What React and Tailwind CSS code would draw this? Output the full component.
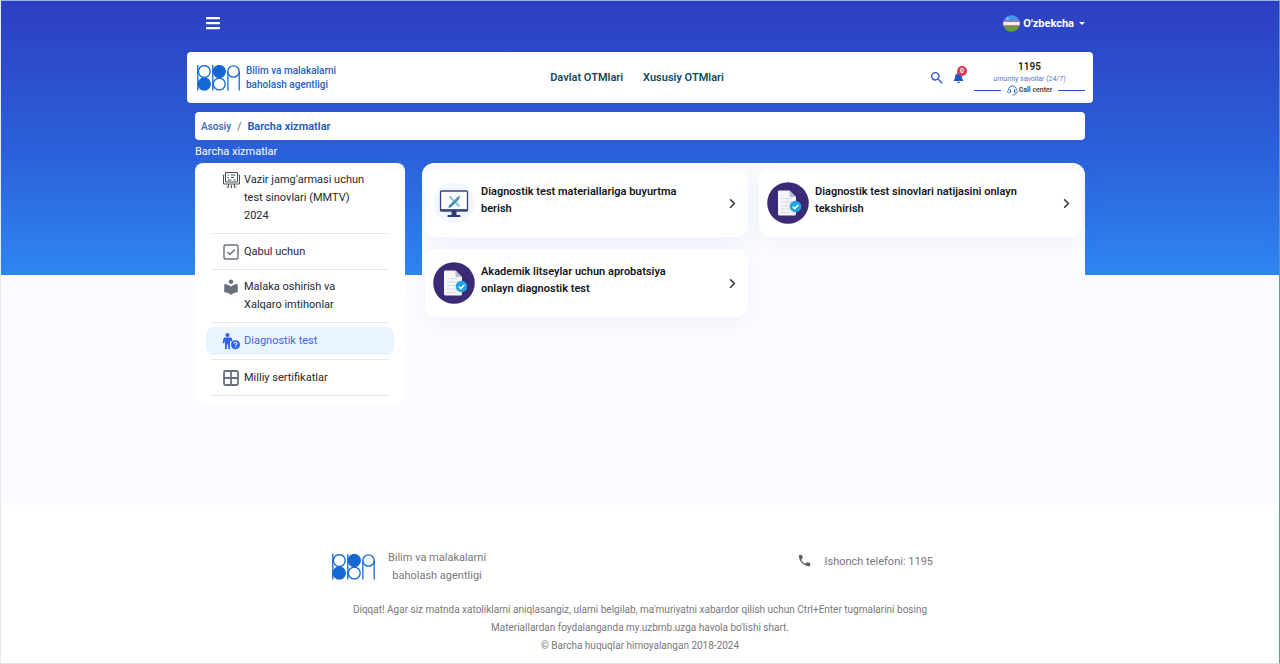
import { FaBars, FaBell } from "react-icons/fa";
import { MdSearch, MdPhone, MdLocalLibrary } from "react-icons/md";
import { ChevronRight } from "lucide-react";

function Logo({ className }) {
  return (
    <svg viewBox="0 0 43 26" className={className} fill="none" stroke="#1568d3" strokeWidth="1.3" aria-hidden="true">
      <path d="M.8 0v25.5M15.8 0v25.5M30.9 6.500v19M42.200 6.500v19" />
      <circle cx="7.300" cy="6.500" r="5.900" />
      <circle cx="7.300" cy="19" r="6" fill="#1568d3" />
      <circle cx="22.300" cy="6.500" r="6" fill="#1568d3" />
      <circle cx="22.300" cy="19" r="5.900" />
      <circle cx="36.500" cy="6.500" r="5.700" />
    </svg>
  );
}

function Flag() {
  return (
    <svg viewBox="0 0 18 18" className="size-[17px]" aria-hidden="true">
      <clipPath id="flag-round"><circle cx="9" cy="9" r="8.8" /></clipPath>
      <g clipPath="url(#flag-round)">
        <rect width="18" height="7" fill="#4a93ea" />
        <rect y="6.400" width="18" height="5.400" fill="#f7eef2" />
        <rect y="6.200" width="18" height="1.200" fill="#b0748f" />
        <rect y="10.800" width="18" height="1.200" fill="#a8707a" />
        <rect y="11.800" width="18" height="7" fill="#6b9a3a" />
        <circle cx="5" cy="4" r="1.200" fill="#a5cdf3" />
      </g>
    </svg>
  );
}

function ExamScreenIcon({ className }) {
  return (
    <svg viewBox="0 0 18 18" className={className} fill="none" stroke="#4b5058" aria-hidden="true">
      <path d="M3.500 11V1.500h12V11M2.500 4H1.500v9h16V4H16.500M3.500 11h12" />
      <path d="M5.500 4h1.500M9 4h4.500M5.500 6.500h1.500M9 6.500h3M5.500 9h4M11.500 9h2" />
      <path d="M6.500 13v2.500M12.500 13v2.500M4.500 16h3M11.500 16h3M9.500 14v3" />
    </svg>
  );
}

function CheckBoxIcon({ className }) {
  return (
    <svg viewBox="0 0 18 18" className={className} fill="none" stroke="#69707d" aria-hidden="true">
      <rect x="2" y="2" width="14" height="14" rx="1.500" strokeWidth="1.400" />
      <path d="M5.500 9l2.500 2.500 4.800-5" strokeWidth="1.500" />
    </svg>
  );
}

function WindowIcon({ className }) {
  return (
    <svg viewBox="0 0 18 18" className={className} fill="none" stroke="#69707d" strokeWidth="1.800" aria-hidden="true">
      <rect x="2" y="2" width="14" height="14" rx="1.500" />
      <path d="M9 2v14M2 9h14" />
    </svg>
  );
}

function PersonQuestionIcon({ className }) {
  return (
    <svg viewBox="0 0 18 18" className={className} fill="#2f62e8" aria-hidden="true">
      <circle cx="5.500" cy="3" r="2" />
      <path d="M3 5.500h5c1 0 1.700.5 2 1.300l.6 2-1.500.9L8 8.500V17H6.200v-4.500H4.800V17H3V8.500l-.8 3L.5 11l.9-4C1.600 6 2 5.500 3 5.500z" />
      <circle cx="13.500" cy="12.700" r="4.500" />
      <path d="M12 11.700c0-2.100 3.100-1.900 2.900 0-.1 1.100-1.300 1-1.300 2M13.600 14.500v1.100" stroke="#eaf4ff" strokeWidth="1.100" fill="none" />
    </svg>
  );
}

function MonitorBadge() {
  return (
    <svg viewBox="0 0 42 42" className="size-[42px] shrink-0" aria-hidden="true">
      <circle cx="21" cy="21" r="20.500" fill="#f3f7fd" />
      <rect x="7.500" y="9" width="27" height="20" rx="1" fill="#fdfeff" stroke="#35457f" strokeWidth="1.300" />
      <path d="M7 28h28" stroke="#35457f" strokeWidth="1.800" />
      <path d="M18.500 29h5v4H27q1.500 1.700 0 2H15q-1.500-.3 0-2h3.500z" fill="#2c3c78" />
      <path d="M16.500 14.500l10 10" stroke="#8fc4d6" strokeWidth="2.200" />
      <path d="M27.500 13.500l-3.500 2-8 8-.5 2.500 2.500-.8 7.500-7.500z" fill="#4085b8" />
      <path d="M20 19.500l4.500-3" stroke="#5ec0c0" strokeWidth="1" />
    </svg>
  );
}

function DocumentBadge() {
  return (
    <svg viewBox="0 0 42 42" className="size-[42px] shrink-0" aria-hidden="true">
      <circle cx="21" cy="21" r="20.800" fill="#3b2b76" />
      <path d="M12 8.500h10.500l6.500 6.500v17q0 1.500-1.500 1.500h-15q-1.500 0-1.500-1.500V9.500q0-1 1-1z" fill="#f4f5f8" />
      <path d="M22.500 8.500l6.500 6.500h-5q-1.500 0-1.500-1.500z" fill="#b9bccb" />
      <path d="M14 16.500h11M14 20h12M14 23.500h9M14 27h8M14 30.500h9" stroke="#d8dbe3" strokeWidth="1.100" />
      <circle cx="28.500" cy="24.500" r="5.800" fill="#1ba5e2" />
      <path d="M25.800 24.600l2 2 3.600-3.800" stroke="#fff" strokeWidth="1.600" fill="none" />
    </svg>
  );
}

function HeadsetIcon() {
  return (
    <svg viewBox="0 0 12 12" className="size-[11px] shrink-0" fill="none" stroke="#2a63c4" aria-hidden="true">
      <path d="M2.700 8.800H2C.3 8.300.3 5.800 1.700 5.400 1.700 2.700 3.500 1 6 1s4.300 1.700 4.300 4.400c1.400.4 1.400 2.900-.3 3.400h-.7" strokeWidth="1" />
      <path d="M3.700 5v3.500M8.300 5v3.500" strokeWidth="1.400" />
      <path d="M9.800 9q-.8 2-3.800 2" strokeWidth="1" />
    </svg>
  );
}

const sections = [
  { label: "Vazir jamg‘armasi uchun test sinovlari (MMTV) 2024", Icon: ExamScreenIcon },
  { label: "Qabul uchun", Icon: CheckBoxIcon },
  { label: "Malaka oshirish va Xalqaro imtihonlar", Icon: MdLocalLibrary },
  { label: "Diagnostik test", Icon: PersonQuestionIcon, active: true },
  { label: "Milliy sertifikatlar", Icon: WindowIcon },
];

const services = [
  { title: "Diagnostik test materiallariga buyurtma berish", Badge: MonitorBadge },
  { title: "Diagnostik test sinovlari natijasini onlayn tekshirish", Badge: DocumentBadge },
  { title: "Akademik litseylar uchun aprobatsiya onlayn diagnostik test", Badge: DocumentBadge },
];

function Sidebar() {
  return (
    <nav aria-label="Xizmatlar" className="w-[210px] shrink-0 rounded-lg bg-white px-4 pb-2">
      <ul>
        {sections.map(({ label, Icon, active }) => (
          <li key={label} className="flex min-h-9 items-center border-b border-[#e6e8eb] py-1">
            <a
              href="#"
              aria-current={active ? "page" : undefined}
              className={
                active
                  ? "-mx-[5px] flex grow gap-1 rounded-lg bg-[#eaf4ff] px-4 py-[5px] text-[#3f66e0]"
                  : "flex grow gap-1 px-[11px] py-1 text-[#25282c]"
              }
            >
              <Icon className="size-[18px] shrink-0 text-[#69707d]" />
              <span className="w-[128px] leading-[18px]">{label}</span>
            </a>
          </li>
        ))}
      </ul>
    </nav>
  );
}

function ServiceCard({ title, Badge }) {
  return (
    <a
      href="#"
      className="flex h-[68px] items-center gap-1.5 rounded-xl bg-white px-2 shadow-[0_6px_24px_rgba(80,110,200,0.07)]"
    >
      <Badge />
      <span className="mb-1.5 w-[205px] font-semibold text-[#15171a]">{title}</span>
      <ChevronRight className="ml-auto size-[15px] text-[#333]" strokeWidth={2.5} />
    </a>
  );
}

export default function App() {
  return (
    <div className="min-h-screen border-t border-r border-b border-l border-t-[#9db4e8] border-r-[#5d93c6] border-b-[#e2e2e2] border-l-[#e9e9ec] bg-white font-[Roboto,sans-serif] text-[11px] leading-[17px]">
      <div className="min-h-[504px] bg-[#fbfcff] bg-[linear-gradient(180deg,#2d3fc0_0%,#2b60da_55%,#2e86f0_100%)] bg-[length:100%_274px] bg-no-repeat">
        <div className="mx-auto w-full max-w-[890px]">
          <div className="flex h-[51px] items-center justify-between pb-[7px] pl-2.5">
            <button type="button" aria-label="Menyu" className="text-white">
              <FaBars className="size-4" />
            </button>
            <button type="button" className="flex items-center gap-[3px] font-bold text-white">
              <Flag />
              O'zbekcha
              <svg viewBox="0 0 6 3" className="ml-0.5 w-[6px]" fill="currentColor" aria-hidden="true">
                <path d="M0 0h6L3 3z" />
              </svg>
            </button>
          </div>

          <header className="-mx-2 flex h-[51px] items-center rounded bg-white pr-2 pl-2.5">
            <a href="#" className="flex flex-1 items-center gap-1.5 text-[10px] leading-[14px] font-medium text-[#2862bd]">
              <Logo className="h-[26px] w-[43px]" />
              <span className="w-[110px]">Bilim va malakalarni baholash agentligi</span>
            </a>
            <nav className="mr-2 flex gap-5 font-semibold whitespace-nowrap text-[#154a60]">
              <a href="#">Davlat OTMlari</a>
              <a href="#">Xususiy OTMlari</a>
            </nav>
            <div className="flex flex-1 items-center justify-end">
              <button type="button" aria-label="Qidirish" className="mr-2 text-[#2f5bc4]">
                <MdSearch className="size-4" />
              </button>
              <button type="button" aria-label="Bildirishnomalar" className="relative mr-2.5 text-[#2255cc]">
                <FaBell className="size-[11px]" />
                <span className="absolute -top-1.5 left-1 flex size-[10px] items-center justify-center rounded-full bg-[#dc3b56] text-[7px] leading-none font-bold text-white">
                  0
                </span>
              </button>
              <div className="w-[111px] text-center">
                <div className="text-[10px] leading-[14px] font-semibold text-[#222]">1195</div>
                <div className="text-[7px] leading-[11px] text-[#5577cc]">umumiy savollar (24/7)</div>
                <div className="flex items-center gap-1.5 text-[7px] leading-[11px] font-semibold text-[#444]">
                  <span className="h-px grow bg-[#2458c0]" />
                  <span className="flex items-center gap-px">
                    <HeadsetIcon />
                    Call center
                  </span>
                  <span className="h-px grow bg-[#2458c0]" />
                </div>
              </div>
            </div>
          </header>

          <nav aria-label="Joylashuv" className="mt-[9px] flex h-7 items-center gap-1.5 rounded bg-white px-1.5 font-semibold">
            <a href="#" className="text-[10px] text-[#4a70b8]">Asosiy</a>
            <span className="text-[#7a7f88]">/</span>
            <span className="text-[#2458b8]">Barcha xizmatlar</span>
          </nav>

          <h1 className="mt-[3px] mb-[3px] text-white">Barcha xizmatlar</h1>

          <div className="flex items-start gap-[17px]">
            <Sidebar />
            <main className="grid min-h-[240px] grow grid-cols-2 content-start gap-x-[11px] gap-y-3 rounded-xl bg-[#fbfcff] px-[3px] pt-1.5">
              {services.map((service) => (
                <ServiceCard key={service.title} {...service} />
              ))}
            </main>
          </div>
        </div>
      </div>

      <footer className="px-4 pt-11 pb-2 text-[#77787a]">
        <div className="mx-auto flex w-full max-w-[616px] justify-between">
          <div className="flex items-center gap-2">
            <Logo className="h-[26px] w-[43px]" />
            <p className="w-[108px] text-center leading-[18px]">Bilim va malakalarni baholash agentligi</p>
          </div>
          <div className="mr-[15px] flex gap-3 pt-1">
            <MdPhone className="size-[15px] text-[#5c5d60]" />
            <p>Ishonch telefoni: 1195</p>
          </div>
        </div>
        <div className="mt-4 text-center text-[10px] leading-[18px]">
          <p>Diqqat! Agar siz matnda xatoliklarni aniqlasangiz, ularni belgilab, ma'muriyatni xabardor qilish uchun Ctrl+Enter tugmalarini bosing</p>
          <p>Materiallardan foydalanganda my.uzbmb.uzga havola bo'lishi shart.</p>
          <p>© Barcha huquqlar himoyalangan 2018-2024</p>
        </div>
      </footer>
    </div>
  );
}
